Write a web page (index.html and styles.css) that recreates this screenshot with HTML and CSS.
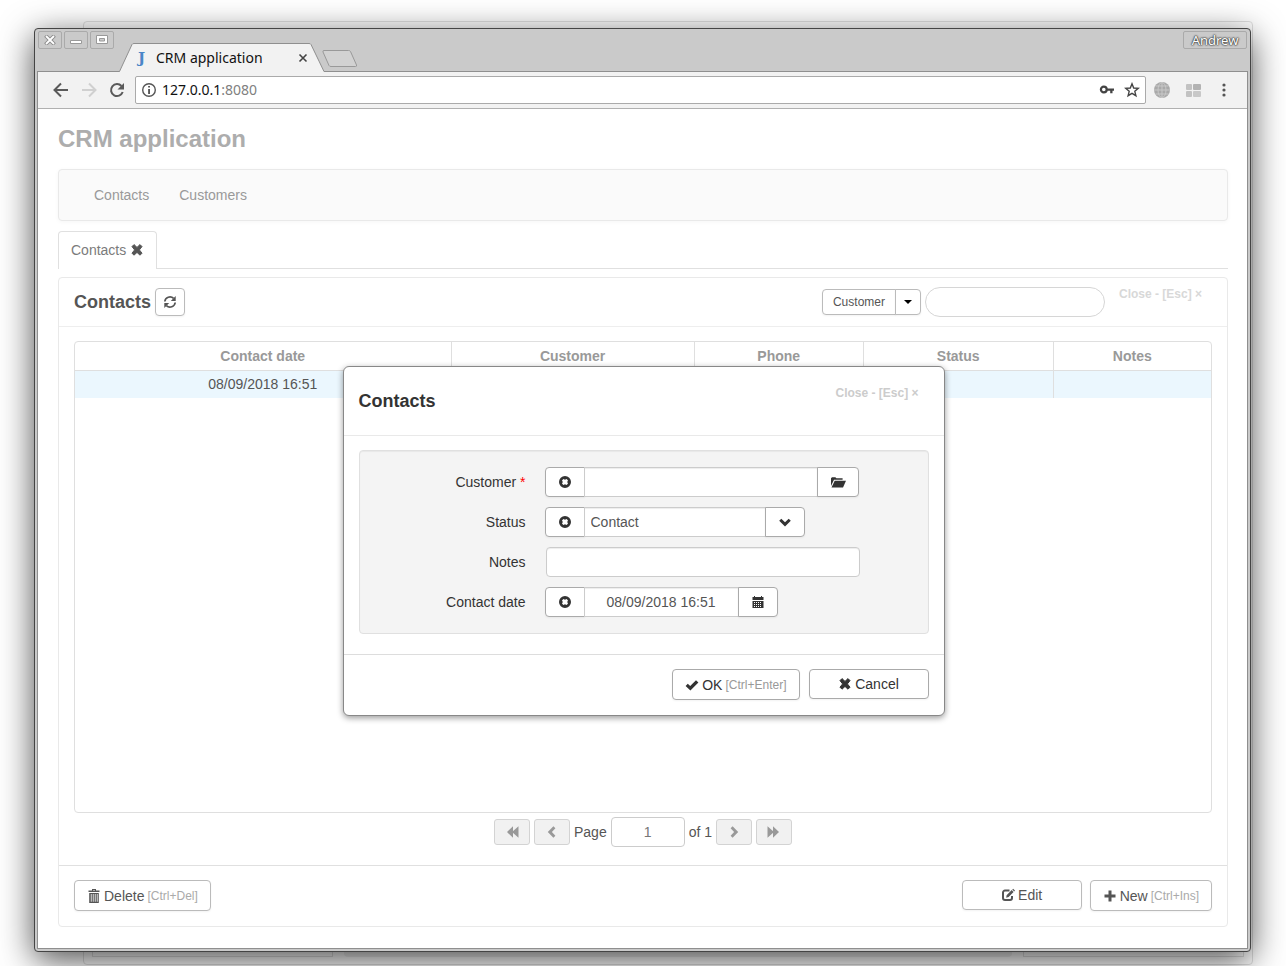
FILE: index.html
```
<!DOCTYPE html>
<html lang="en">
<head>
	<meta charset="UTF-8">
	<title>CRM application</title>
	<link rel="stylesheet" href="styles.css">
</head>
<body>
	<svg class="symbols" aria-hidden="true">
		<symbol id="remove" viewBox="0 0 14 14"><path d="M2 3.6 4 1.6 7 4.4 10 1.6 12 3.6 9.4 6.9 12 10.2 10 12.2 7 9.4 4 12.2 2 10.2 4.6 6.9z" stroke="currentColor" stroke-linejoin="round"/></symbol>
		<symbol id="clear" viewBox="0 0 14 14"><path fill-rule="evenodd" d="M7 1a6 6 0 1 1 0 12A6 6 0 0 1 7 1zM5.4 4 4 5.400 4.800 7 4 8.600 5.400 10 7 9.200 8.600 10 10 8.600 9.200 7 10 5.400 8.600 4 7 4.800z"/></symbol>
		<symbol id="refresh" viewBox="0 0 14 14"><path d="M1.800 6.500A5.200 5.200 0 0 1 10.600 3.400M12.200 7.500A5.200 5.200 0 0 1 3.400 10.600" fill="none" stroke="currentColor" stroke-width="1.700"/><path d="M12.700 1v5H7.800zM1.300 13V8h4.900z"/></symbol>
		<symbol id="folder" viewBox="0 0 16 14"><path d="M1 11V3.200L2 2.200h3.400l1 1h6.200v1.600H4L1 11z"/><path d="M4.700 5.700H16L13 12.600H1.500z"/></symbol>
		<symbol id="down" viewBox="0 0 14 14"><path d="M1.200 5.700 3.300 3.700 7 7.200 10.700 3.700 12.800 5.700 7 11.400z"/></symbol>
		<symbol id="left" viewBox="0 0 14 14"><path d="M8.400 1.200 10.400 3.300 6.900 7 10.400 10.700 8.400 12.800 2.800 7z"/></symbol>
		<symbol id="right" viewBox="0 0 14 14"><path d="M5.600 1.200 3.600 3.300 7.100 7 3.600 10.700 5.600 12.800 11.200 7z"/></symbol>
		<symbol id="first" viewBox="0 0 14 14"><path d="M8 1.200v11.600L2 7zM13.500 1.200v11.600L7 7z"/></symbol>
		<symbol id="last" viewBox="0 0 14 14"><path d="M6 1.200v11.600L12 7zM.5 1.200v11.600L7 7z"/></symbol>
		<symbol id="calendar" viewBox="0 0 14 14"><path d="M1.500 2H3V1h1v1h6V1h1v1h1.500v3h-11z"/><path fill-rule="evenodd" d="M1.500 6h11v7h-11zM3 7v1h1V7zm2 0v1h1V7zm2 0v1h1V7zm2 0v1h1V7zM3 9v1h1V9zm2 0v1h1V9zm2 0v1h1V9zm2 0v1h1V9zM3 11v1h1v-1zm2 0v1h1v-1zm2 0v1h1v-1zm2 0v1h1v-1z"/></symbol>
		<symbol id="ok" viewBox="0 0 14 14"><path d="M.6 8 2.800 5.700 5.200 7.900 11 2.200 13.400 4.400 5.400 12.600z"/></symbol>
		<symbol id="trash" viewBox="0 0 14 14"><path fill-rule="evenodd" d="M5 0h4v1.600h3.500V3h-11V1.600H5zM6 1v.6h2V1zM2.200 4h9.600v10H2.200zM3.800 5v7.800h.8V5zm2 0v7.800h.8V5zm2 0v7.800h.8V5zm2 0v7.800h.8V5z"/></symbol>
		<symbol id="edit" viewBox="0 0 14 14"><path d="M8.500 2.500H4A2 2 0 0 0 2 4.500V10a2 2 0 0 0 2 2h5a2 2 0 0 0 2-2V8" fill="none" stroke="currentColor" stroke-width="2"/><path d="M5.200 9.800 5.600 7.200 10.700 2.100 12.600 4 7.600 9.100zM11.300 1.500l.8-.8 1.900 1.800-.8.900z"/></symbol>
		<symbol id="plus" viewBox="0 0 14 14"><path d="M5.500 1.500h3v4h4v3h-4v4h-3v-4h-4v-3h4z"/></symbol>
	</svg>

	<div class="behind"><span></span><span></span><span></span></div>

	<div class="window">
		<header class="titlebar">
			<div class="win-buttons">
				<button aria-label="Close window"><svg width="12" height="10" viewBox="0 0 12 10"><path d="M1.500.500l9 9M10.500.500l-9 9" stroke="#8a8a8a" stroke-width="3.800"/><path d="M2 1l8 8M10 1 2 9" stroke="#fff" stroke-width="1.800"/></svg></button>
				<button aria-label="Minimize window"><svg width="12" height="10" viewBox="0 0 12 10"><path d="M.5 5.500h11v3H.5z" fill="#fff" stroke="#999"/></svg></button>
				<button aria-label="Maximize window"><svg width="12" height="10" viewBox="0 0 12 10"><path d="M.5.500h11v8H.5z" fill="#fff" stroke="#999"/><path d="M3.500 3.500h5v2.500h-5z" fill="#ccc" stroke="#999"/></svg></button>
			</div>
			<div class="browser-tab">
				<svg class="tab-shape" width="208" height="29" viewBox="0 0 208 29"><path d="M0 28.500h1.500L14 1.500Q14.500.5 16 .5h175q1.500 0 2 1L206 28.500h2V29H0z" fill="#f2f2f2"/><path d="M0 28.500h1.500L14 1.500Q14.500.5 16 .5h175q1.500 0 2 1L206 28.500h2" fill="none" stroke="#8f8f8f"/></svg>
				<span class="favicon">J</span>
				<span class="tab-title">CRM application</span>
				<button class="tab-close" aria-label="Close tab"><svg width="10" height="10" viewBox="0 0 10 10"><path d="M1.500 1.500l7 7M8.500 1.500l-7 7" stroke="#444" stroke-width="1.600"/></svg></button>
			</div>
			<button class="new-tab" aria-label="New tab"><svg width="36" height="18" viewBox="0 0 36 18"><path d="M2 .5h24.500q1.500 0 2 1L34.500 15q.5 1.500-1 1.500H9q-1.500 0-2-1L1 2Q.5.500 2 .5z" fill="#d2d2d2" stroke="#999"/></svg></button>
			<button class="user">Andrew</button>
		</header>

		<div class="frame">
			<div class="toolbar">
				<button class="tool" aria-label="Back"><svg width="16" height="16" viewBox="0 0 16 16"><path d="M15 8H2M8 1.500 1.500 8 8 14.500" fill="none" stroke="#5a5a5a" stroke-width="2"/></svg></button>
				<button class="tool" aria-label="Forward"><svg width="16" height="16" viewBox="0 0 16 16"><path d="M1 8h13M8 1.500 14.500 8 8 14.500" fill="none" stroke="#d0d0d0" stroke-width="2"/></svg></button>
				<button class="tool" aria-label="Reload"><svg width="16" height="16" viewBox="0 0 16 16"><path d="M12.500 4A6 6 0 1 0 13.700 10" fill="none" stroke="#5a5a5a" stroke-width="2"/><path d="M15 1v6.500H8.500z" fill="#5a5a5a"/></svg></button>
				<div class="address">
					<svg width="16" height="16" viewBox="0 0 16 16"><circle cx="8" cy="8" r="6.300" fill="none" stroke="#555" stroke-width="1.400"/><path d="M7.200 4h1.700v1.600H7.200zM7.200 7h1.700v5H7.200z" fill="#444"/></svg>
					<span class="url">127.0.0.1<i>:8080</i></span>
					<svg width="16" height="16" viewBox="0 0 16 16"><circle cx="4.800" cy="7.500" r="2.900" fill="none" stroke="#444" stroke-width="2.200"/><path d="M8 6.500h7v2.200h-1.500v2.500h-2.300V8.700H8z" fill="#444"/></svg>
					<svg width="16" height="16" viewBox="0 0 16 16"><path d="M8 1.800 9.700 6l4.600.3-3.500 3 1.100 4.400L8 11.300l-3.900 2.400 1.100-4.400-3.500-3L6.300 6z" fill="none" stroke="#444" stroke-width="1.400"/></svg>
				</div>
				<div class="extensions">
					<svg width="16" height="16" viewBox="0 0 16 16"><circle cx="8" cy="8" r="8" fill="#a9a9a9"/><path d="M8 0v16M0 8h16M1.500 4h13M1.500 12h13" stroke="#c8c8c8" fill="none"/><ellipse cx="8" cy="8" rx="4" ry="7.500" fill="none" stroke="#c8c8c8"/></svg>
					<svg width="16" height="14" viewBox="0 0 16 14"><rect x="1" y="1" width="6" height="6" rx="1" fill="#c2c2c2"/><rect x="8" y="1" width="8" height="6" rx="1" fill="#b3b3b3"/><rect x="1" y="8" width="6" height="6" rx="1" fill="#c2c2c2"/><rect x="8" y="8" width="8" height="6" rx="1" fill="#c8c8c8"/></svg>
					<svg width="16" height="16" viewBox="0 0 16 16"><circle cx="8" cy="3" r="1.600" fill="#555"/><circle cx="8" cy="8" r="1.600" fill="#555"/><circle cx="8" cy="13" r="1.600" fill="#555"/></svg>
				</div>
			</div>

			<main class="page">
				<h1>CRM application</h1>
				<nav class="menu">
					<a href="#contacts">Contacts</a>
					<a href="#customers">Customers</a>
				</nav>
				<div class="tabs">
					<div class="tab"><a href="#contacts">Contacts</a><button aria-label="Close Contacts"><svg class="icon"><use href="#remove"/></svg></button></div>
				</div>

				<section class="panel" id="contacts">
					<header class="panel-head">
						<h2>Contacts</h2>
						<button class="btn refresh" aria-label="Refresh"><svg class="icon"><use href="#refresh"/></svg></button>
						<div class="split">
							<button class="btn">Customer</button><button class="btn caret" aria-label="Choose field"><svg width="8" height="4" viewBox="0 0 8 4"><path d="M0 0h8L4 4z"/></svg></button>
						</div>
						<input class="search" type="text" aria-label="Search">
						<button class="close">Close - [Esc] ×</button>
					</header>
					<div class="panel-body">
						<div class="grid">
							<table>
								<colgroup><col class="c-date"><col class="c-customer"><col class="c-phone"><col class="c-status"><col></colgroup>
								<thead>
									<tr><th>Contact date</th><th>Customer</th><th>Phone</th><th>Status</th><th>Notes</th></tr>
								</thead>
								<tbody>
									<tr><td>08/09/2018 16:51</td><td></td><td></td><td></td><td></td></tr>
								</tbody>
							</table>
						</div>
						<div class="pager">
							<button aria-label="First page"><svg class="icon"><use href="#first"/></svg></button>
							<button aria-label="Previous page"><svg class="icon"><use href="#left"/></svg></button>
							<label for="page">Page</label>
							<input id="page" type="text" value="1">
							<span>of 1</span>
							<button aria-label="Next page"><svg class="icon"><use href="#right"/></svg></button>
							<button aria-label="Last page"><svg class="icon"><use href="#last"/></svg></button>
						</div>
					</div>
					<footer class="panel-foot">
						<button class="btn hint delete"><svg class="icon"><use href="#trash"/></svg>Delete <small>[Ctrl+Del]</small></button>
						<button class="btn wide"><svg class="icon"><use href="#edit"/></svg>Edit</button>
						<button class="btn hint"><svg class="icon"><use href="#plus"/></svg>New <small>[Ctrl+Ins]</small></button>
					</footer>
				</section>
			</main>
		</div>

		<div class="overlay">
			<form class="modal" role="dialog" aria-label="Contacts">
				<header class="modal-head">
					<h3>Contacts</h3>
					<button type="button" class="close">Close - [Esc] ×</button>
				</header>
				<div class="fields">
					<label for="customer">Customer <em>*</em></label>
					<div class="group">
						<button type="button" class="btn" aria-label="Clear customer"><svg class="icon"><use href="#clear"/></svg></button>
						<input class="in-customer" id="customer" type="text">
						<button type="button" class="btn" aria-label="Find customer"><svg class="icon folder"><use href="#folder"/></svg></button>
					</div>
					<label for="status">Status</label>
					<div class="group">
						<button type="button" class="btn" aria-label="Clear status"><svg class="icon"><use href="#clear"/></svg></button>
						<select class="in-status" id="status"><option>Contact</option></select>
						<button type="button" class="btn" aria-label="Show statuses"><svg class="icon"><use href="#down"/></svg></button>
					</div>
					<label for="notes">Notes</label>
					<div class="group">
						<input class="in-notes" id="notes" type="text">
					</div>
					<label for="date">Contact date</label>
					<div class="group">
						<button type="button" class="btn" aria-label="Clear date"><svg class="icon"><use href="#clear"/></svg></button>
						<input class="in-date" id="date" type="text" value="08/09/2018 16:51">
						<button type="button" class="btn" aria-label="Open calendar"><svg class="icon"><use href="#calendar"/></svg></button>
					</div>
				</div>
				<footer class="modal-foot">
					<button type="button" class="btn hint"><svg class="icon"><use href="#ok"/></svg>OK <small>[Ctrl+Enter]</small></button>
					<button type="button" class="btn wide"><svg class="icon"><use href="#remove"/></svg>Cancel</button>
				</footer>
			</form>
		</div>
	</div>
</body>
</html>
```
FILE: styles.css
```
*{
	box-sizing: border-box;
	margin: 0;
	padding: 0;
}
body{
	display: flex;
	min-height: 100vh;
	padding: 28px 35px 14px 34px;
	background: #fff;
	color: #555;
	font: 14px/20px "Liberation Sans", Arial, sans-serif;
	position: relative;
	overflow-x: hidden;
}
button, input, select{
	font: inherit;
	color: inherit;
	outline: none;
}
button{
	background: none;
	border: none;
	cursor: pointer;
}
a{
	color: inherit;
	text-decoration: none;
}
svg{
	flex: none;
}
.symbols{
	position: absolute;
	width: 0;
	height: 0;
}
.icon{
	width: 14px;
	height: 14px;
	fill: currentColor;
}

/* page showing from behind the window */
.behind{
	position: absolute;
	top: 21px;
	right: 33px;
	bottom: 1px;
	left: 83px;
	display: flex;
	gap: 11px;
	align-items: flex-end;
	padding: 0 8px 7px;
	border: 1px solid #e0e0e0;
	border-radius: 4px;
}
.behind span{
	flex: 240;
	height: 20px;
	border: 1px solid #e0e0e0;
}
.behind span:nth-child(2){
	flex: 672;
	border: none;
	border-radius: 4px;
	background: #f0f0f0;
}
.behind span:nth-child(3){
	flex: 220;
}

/* browser window */
.window{
	flex: 1;
	min-width: 0;
	display: flex;
	flex-direction: column;
	position: relative;
	padding: 0 2px 2px;
	border: 1px solid #444;
	border-radius: 4px;
	background: #cacaca;
	box-shadow: 0 8px 34px rgba(0,0,0,.7);
}
.titlebar{
	display: flex;
	align-items: flex-start;
	height: 43px;
	margin-bottom: -1px;
	padding-top: 2px;
	position: relative;
	z-index: 1;
}
.win-buttons{
	display: flex;
	gap: 2px;
	padding-left: 1px;
}
.win-buttons button, .user{
	display: flex;
	align-items: center;
	justify-content: center;
	width: 24px;
	height: 18px;
	border: 1px solid #aaa;
	border-radius: 2px;
}
.titlebar .user{
	width: 64px;
	margin: 0 1px 0 auto;
	color: #fff;
	font: 13px/16px "Noto Sans", sans-serif;
	text-shadow: 0 0 1px #333, 0 0 2px #333, 0 0 2px #333;
}
.browser-tab{
	display: flex;
	align-items: center;
	align-self: flex-end;
	width: 208px;
	height: 29px;
	margin-left: 4px;
	padding: 0 18px 0 20px;
	position: relative;
	color: #111;
	font: 14px/20px "Noto Sans", sans-serif;
}
.tab-shape{
	position: absolute;
	top: 0;
	left: 0;
	z-index: -1;
}
.favicon{
	width: 18px;
	color: #4a86c8;
	font: bold 15px/20px "DejaVu Serif", serif;
}
.tab-title{
	flex: 1;
}
.tab-close{
	display: flex;
}
.new-tab{
	margin: 19px 0 0 -4px;
}
.frame{
	flex: 1;
	display: flex;
	flex-direction: column;
	border: 1px solid #8f8f8f;
	background: #fff;
}
.toolbar{
	display: flex;
	align-items: center;
	height: 37px;
	padding: 0 15px;
	background: #f2f2f2;
	border-bottom: 1px solid #b0b0b0;
}
.tool{
	display: flex;
	margin-right: 12px;
}
.address{
	flex: 1;
	display: flex;
	align-items: center;
	gap: 9px;
	height: 28px;
	margin-left: -2px;
	padding: 0 5px;
	background: #fff;
	border: 1px solid #aaa;
	border-radius: 2px;
	color: #111;
	font: 14px/20px "Noto Sans", sans-serif;
}
.url{
	flex: 1;
	margin-left: -4px;
}
.url i{
	color: #808080;
	font-style: normal;
}
.extensions{
	display: flex;
	align-items: center;
	gap: 15px;
	margin-left: 8px;
}

/* application */
.page{
	flex: 1;
	display: flex;
	flex-direction: column;
	padding: 16px 19px 21px 20px;
}
h1{
	margin-bottom: 16px;
	color: #adadad;
	font-size: 24px;
	line-height: 28px;
}
.menu{
	display: flex;
	gap: 30px;
	padding: 15px 35px;
	background: #fafafa;
	border: 1px solid #e9e9e9;
	border-radius: 4px;
	box-shadow: 0 1px 4px rgba(0,0,0,.04);
	color: #999;
}
.tabs{
	display: flex;
	height: 38px;
	margin: 10px 0 8px;
	border-bottom: 1px solid #e0e0e0;
}
.tab{
	display: flex;
	align-items: center;
	gap: 4px;
	height: 38px;
	padding: 0 12px 1px;
	background: #fff;
	border: 1px solid #e0e0e0;
	border-bottom: none;
	border-radius: 4px 4px 0 0;
	color: #7b7b7b;
}
.tab button{
	display: flex;
	color: #555;
}
.panel{
	flex: 1;
	display: flex;
	flex-direction: column;
	border: 1px solid #e9e9e9;
	border-radius: 4px;
}
.panel-head{
	display: flex;
	align-items: center;
	gap: 4px;
	height: 49px;
	padding: 0 25px 0 15px;
	border-bottom: 1px solid #eee;
}
h2, h3{
	font-size: 18px;
	line-height: 20px;
}
.btn{
	display: flex;
	align-items: center;
	justify-content: center;
	gap: 3px;
	height: 30px;
	padding: 0 12px;
	background: #fff;
	border: 1px solid #bbb;
	border-radius: 4px;
	box-shadow: 0 1px 2px rgba(0,0,0,.05);
	white-space: nowrap;
}
.btn.hint{
	height: 31px;
}
.btn small{
	color: #aaa;
	font-size: 12px;
}
.refresh{
	width: 30px;
	height: 28px;
	padding: 0;
}
.split{
	display: flex;
	margin-left: auto;
}
.split .btn{
	height: 26px;
	padding: 0 10px;
	border-radius: 4px 0 0 4px;
	font-size: 12px;
}
.split .caret{
	width: 26px;
	margin-left: -1px;
	padding: 0;
	border-radius: 0 4px 4px 0;
}
.search{
	width: 180px;
	height: 30px;
	padding: 0 14px;
	border: 1px solid #d6d6d6;
	border-radius: 15px;
}
.close{
	color: #d8d8d8;
	font-size: 12px;
	font-weight: bold;
	line-height: 16px;
}
.panel-head .close{
	align-self: flex-start;
	margin: 8px 0 0 10px;
}
.panel-body{
	flex: 1;
	display: flex;
	flex-direction: column;
	padding: 14px 15px 18px;
}
.grid{
	flex: 1;
	border: 1px solid #dfdfdf;
	border-radius: 4px;
}
table{
	width: 100%;
	table-layout: fixed;
	border-collapse: collapse;
	text-align: center;
}
.c-date{
	width: 33.1%;
}
.c-customer{
	width: 21.4%;
}
.c-phone{
	width: 14.9%;
}
.c-status{
	width: 16.7%;
}
th, td{
	height: 28px;
	border-left: 1px solid #dfdfdf;
}
th{
	color: #999;
	border-bottom: 1px solid #dfdfdf;
}
th:first-child, td:first-child{
	border-left: none;
}
td{
	background: #ebf7fe;
}
.pager{
	display: flex;
	align-items: center;
	justify-content: center;
	gap: 4px;
	margin-top: 4px;
}
.pager button{
	display: flex;
	align-items: center;
	justify-content: center;
	width: 36px;
	height: 26px;
	background: #f1f1f1;
	border: 1px solid #d3d3d3;
	border-radius: 3px;
	color: #999;
}
.pager input{
	width: 74px;
	height: 30px;
	border: 1px solid #ccc;
	border-radius: 4px;
	color: #777;
	text-align: center;
}
.panel-foot{
	display: flex;
	align-items: flex-start;
	gap: 8px;
	padding: 14px 15px 15px;
	border-top: 1px solid #e0e0e0;
}
.panel-foot .delete{
	margin-right: auto;
}
.btn.wide{
	width: 120px;
}

/* contact dialog */
.overlay{
	position: absolute;
	top: 337px;
	left: 0;
	right: 0;
	z-index: 2;
	display: flex;
	justify-content: center;
	padding-left: 2px;
}
.modal{
	width: 602px;
	max-width: 100%;
	background: #fff;
	border: 1px solid #888;
	border-radius: 6px;
	box-shadow: 0 2px 6px rgba(0,0,0,.4);
	color: #333;
}
.modal .btn{
	border-color: #aaa;
}
.modal small{
	color: #999;
}
.modal-head{
	display: flex;
	align-items: center;
	justify-content: space-between;
	height: 69px;
	padding: 0 25px 0 15px;
	border-bottom: 1px solid #e9e9e9;
}
.modal-head .close{
	align-self: flex-start;
	margin-top: 18px;
	color: #ccc;
}
.fields{
	display: grid;
	grid-template-columns: 166px 1fr;
	gap: 10px 19px;
	margin: 14px 15px 20px;
	padding: 16px 0;
	background: #f4f4f4;
	border: 1px solid #e0e0e0;
	border-radius: 4px;
	box-shadow: inset 0 1px 1px rgba(0,0,0,.05);
}
.fields label{
	line-height: 30px;
	text-align: right;
}
.fields em{
	color: red;
	font-style: normal;
}
.group{
	display: flex;
}
.group input, .group select{
	height: 30px;
	padding: 0 6px;
	background: #fff;
	border: 1px solid #ccc;
	box-shadow: inset 0 1px 1px rgba(0,0,0,.075);
	color: #555;
	appearance: none;
}
.group .btn{
	border-radius: 4px 0 0 4px;
}
.group .btn:last-child{
	margin-left: -1px;
	border-radius: 0 4px 4px 0;
}
.group :not(:first-child):not(:last-child){
	margin-left: -1px;
}
.icon.folder{
	width: 16px;
}
.group .in-customer{
	width: 234px;
}
.group .in-status{
	width: 182px;
}
.group .in-notes{
	width: 314px;
	margin-left: 1px;
	border-radius: 4px;
}
.group .in-date{
	width: 155px;
	text-align: center;
}
.modal-foot{
	display: flex;
	align-items: flex-start;
	justify-content: flex-end;
	gap: 9px;
	padding: 14px 15px 15px;
	border-top: 1px solid #ddd;
}
```
